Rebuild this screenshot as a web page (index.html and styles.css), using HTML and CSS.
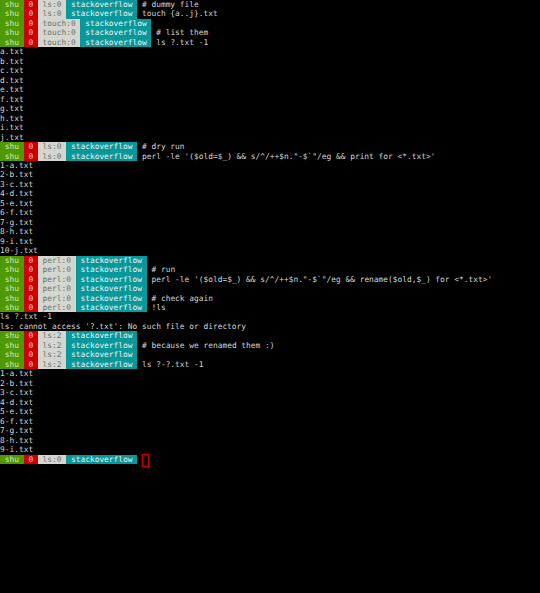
FILE: index.html
```html
<!DOCTYPE html>
<html lang="en">
    <head>
        <meta charset="UTF-8" />
        <meta name="viewport" content="width=device-width, initial-scale=1.0" />
        <title>Terminal : rename with perl</title>
        <link rel="stylesheet" href="styles.css">
    </head>
    <body>
        <div id="terminal">
            <div class="line"><span class="user"> shu </span><span class="code"> 0 </span><span class="cmd"> ls:0 </span><span class="dir"> stackoverflow </span> # dummy file</div>
            <div class="line"><span class="user"> shu </span><span class="code"> 0 </span><span class="cmd"> ls:0 </span><span class="dir"> stackoverflow </span> touch {a..j}.txt</div>
            <div class="line"><span class="user"> shu </span><span class="code"> 0 </span><span class="cmd"> touch:0 </span><span class="dir"> stackoverflow </span></div>
            <div class="line"><span class="user"> shu </span><span class="code"> 0 </span><span class="cmd"> touch:0 </span><span class="dir"> stackoverflow </span> # list them</div>
            <div class="line"><span class="user"> shu </span><span class="code"> 0 </span><span class="cmd"> touch:0 </span><span class="dir"> stackoverflow </span> ls ?.txt -1</div>
            <div class="line">a.txt</div>
            <div class="line">b.txt</div>
            <div class="line">c.txt</div>
            <div class="line">d.txt</div>
            <div class="line">e.txt</div>
            <div class="line">f.txt</div>
            <div class="line">g.txt</div>
            <div class="line">h.txt</div>
            <div class="line">i.txt</div>
            <div class="line">j.txt</div>
            <div class="line"><span class="user"> shu </span><span class="code"> 0 </span><span class="cmd"> ls:0 </span><span class="dir"> stackoverflow </span> # dry run</div>
            <div class="line"><span class="user"> shu </span><span class="code"> 0 </span><span class="cmd"> ls:0 </span><span class="dir"> stackoverflow </span> perl -le '($old=$_) &amp;&amp; s/^/++$n."-$`"/eg &amp;&amp; print for &lt;*.txt&gt;'</div>
            <div class="line">1-a.txt</div>
            <div class="line">2-b.txt</div>
            <div class="line">3-c.txt</div>
            <div class="line">4-d.txt</div>
            <div class="line">5-e.txt</div>
            <div class="line">6-f.txt</div>
            <div class="line">7-g.txt</div>
            <div class="line">8-h.txt</div>
            <div class="line">9-i.txt</div>
            <div class="line">10-j.txt</div>
            <div class="line"><span class="user"> shu </span><span class="code"> 0 </span><span class="cmd"> perl:0 </span><span class="dir"> stackoverflow </span></div>
            <div class="line"><span class="user"> shu </span><span class="code"> 0 </span><span class="cmd"> perl:0 </span><span class="dir"> stackoverflow </span> # run</div>
            <div class="line"><span class="user"> shu </span><span class="code"> 0 </span><span class="cmd"> perl:0 </span><span class="dir"> stackoverflow </span> perl -le '($old=$_) &amp;&amp; s/^/++$n."-$`"/eg &amp;&amp; rename($old,$_) for &lt;*.txt&gt;'</div>
            <div class="line"><span class="user"> shu </span><span class="code"> 0 </span><span class="cmd"> perl:0 </span><span class="dir"> stackoverflow </span></div>
            <div class="line"><span class="user"> shu </span><span class="code"> 0 </span><span class="cmd"> perl:0 </span><span class="dir"> stackoverflow </span> # check again</div>
            <div class="line"><span class="user"> shu </span><span class="code"> 0 </span><span class="cmd"> perl:0 </span><span class="dir"> stackoverflow </span> !ls</div>
            <div class="line">ls ?.txt -1</div>
            <div class="line">ls: cannot access '?.txt': No such file or directory</div>
            <div class="line"><span class="user"> shu </span><span class="code"> 0 </span><span class="cmd"> ls:2 </span><span class="dir"> stackoverflow </span></div>
            <div class="line"><span class="user"> shu </span><span class="code"> 0 </span><span class="cmd"> ls:2 </span><span class="dir"> stackoverflow </span> # because we renamed them :)</div>
            <div class="line"><span class="user"> shu </span><span class="code"> 0 </span><span class="cmd"> ls:2 </span><span class="dir"> stackoverflow </span></div>
            <div class="line"><span class="user"> shu </span><span class="code"> 0 </span><span class="cmd"> ls:2 </span><span class="dir"> stackoverflow </span> ls ?-?.txt -1</div>
            <div class="line">1-a.txt</div>
            <div class="line">2-b.txt</div>
            <div class="line">3-c.txt</div>
            <div class="line">4-d.txt</div>
            <div class="line">5-e.txt</div>
            <div class="line">6-f.txt</div>
            <div class="line">7-g.txt</div>
            <div class="line">8-h.txt</div>
            <div class="line">9-i.txt</div>
            <div class="line"><span class="user"> shu </span><span class="code"> 0 </span><span class="cmd"> ls:0 </span><span class="dir"> stackoverflow </span> <span class="cursor"></span></div>
        </div>
    </body>
</html>
```

FILE: styles.css
```css
* {
    margin: 0;
    padding: 0;
}

html,
body {
    background: #000;
}

body {
    width: 540px;
    height: 593px;
    overflow: hidden;
}

#terminal {
    font-family: "DejaVu Sans Mono", monospace;
    font-size: 7.86px;
    line-height: 9.48px;
    color: #d3d7cf;
}

#terminal .line {
    height: 9.48px;
    white-space: pre;
}

#terminal .line span {
    display: inline-block;
    height: 9.48px;
    vertical-align: top;
}

#terminal .user {
    background: #4e9a06;
    color: #d8e8b8;
}

#terminal .code {
    background: #cc0000;
    color: #f3d0d0;
}

#terminal .cmd {
    background: #d3d7cf;
    color: #6d706b;
}

#terminal .dir {
    background: #06989a;
    color: #f2f2f2;
}

#terminal .line .cursor {
    width: 5px;
    height: 11px;
    margin-top: -1px;
    border: 1px solid #cc0000;
}
```
